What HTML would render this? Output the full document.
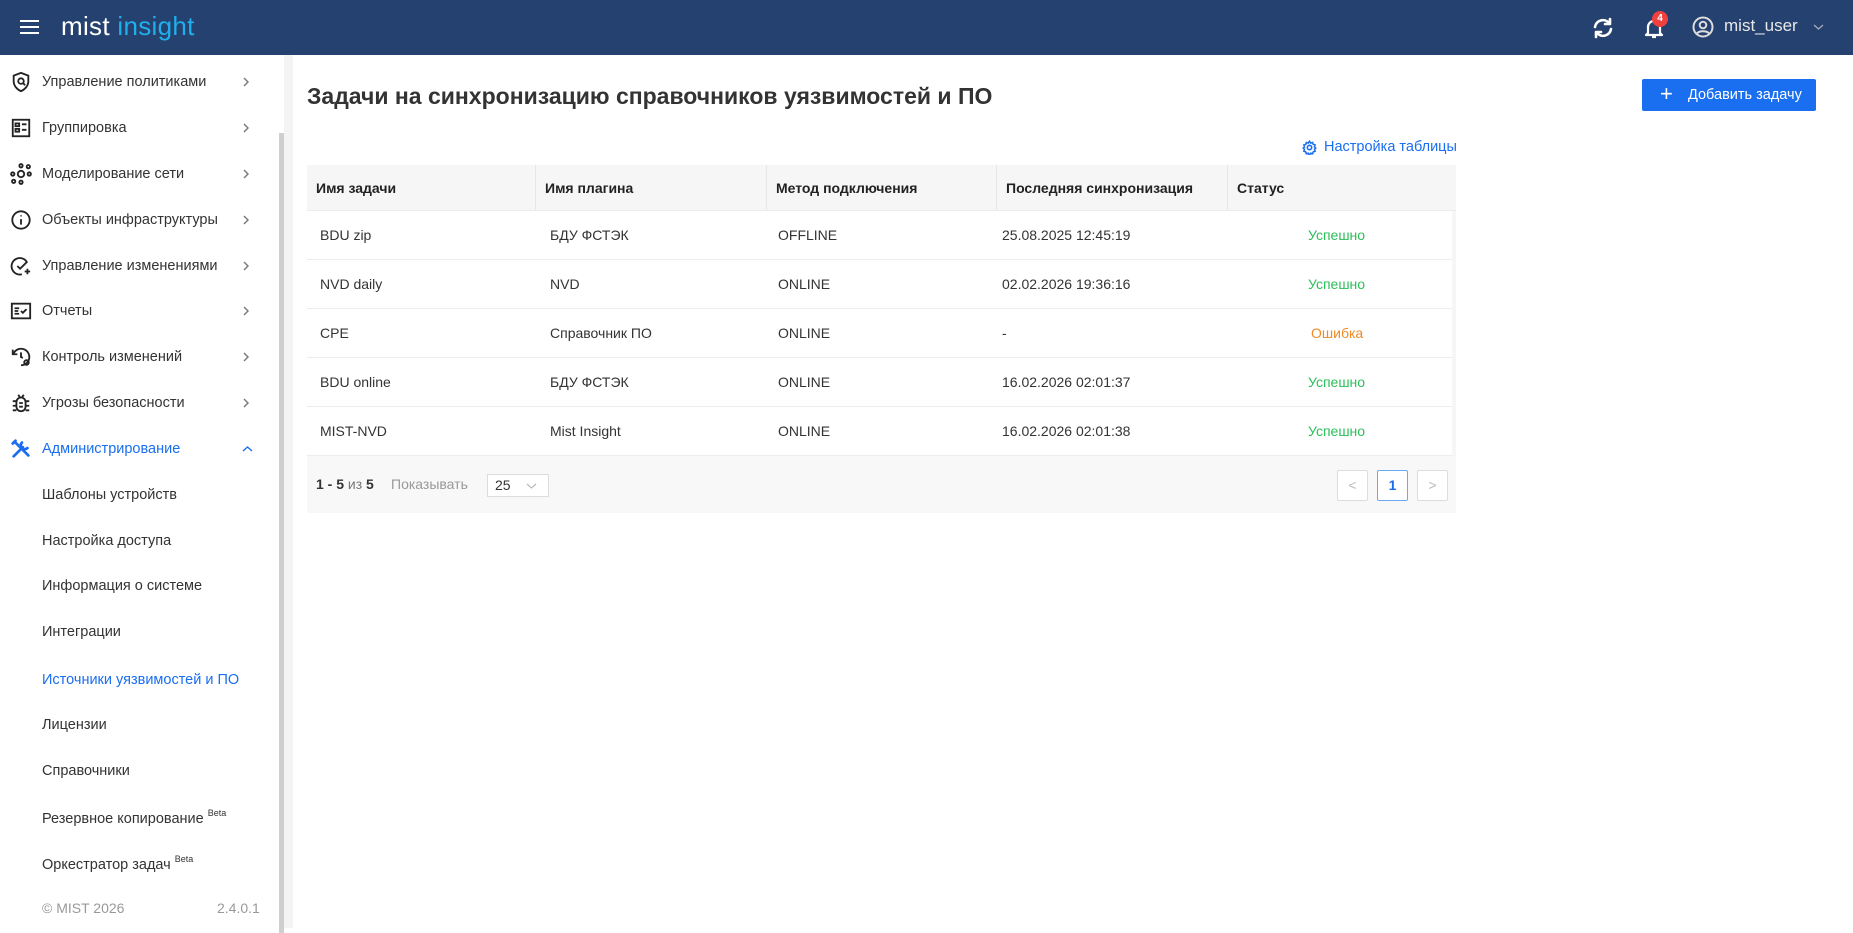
<!DOCTYPE html>
<html><head><meta charset="utf-8"><style>
*{box-sizing:border-box;margin:0;padding:0}
body{width:1853px;height:928px;overflow:hidden;font-family:"Liberation Sans",sans-serif;background:#fff;color:#333;position:relative}
.hdr{position:absolute;left:0;top:0;width:1853px;height:55px;background:#24416f}
.abs{position:absolute}
.side{position:absolute;left:0;top:55px;width:279px;height:873px;background:#fff}
.item{position:absolute;left:42px;font-size:14.5px;color:#333;line-height:18px}
.chev{position:absolute;left:242px;width:9px;height:14px}
.ico{position:absolute;left:10px;width:22px;height:22px}
.sub{position:absolute;left:42px;font-size:14.5px;color:#333;line-height:18px}
sup{font-size:9px;vertical-align:7px}
.th{position:absolute;top:165px;height:46px;background:#f6f6f6;font-weight:bold;font-size:14px;line-height:46px;color:#222}
.row{position:absolute;left:307px;width:1145px;height:49px;border-bottom:1px solid #ececec;font-size:14px;color:#333}
.row span{position:absolute;line-height:48px}
.ok{color:#2cbf5a}.err{color:#f08a24}
.pb{position:absolute;top:470px;width:31px;height:31px;border:1px solid #ddd;border-radius:2px;background:#fff;text-align:center;line-height:29px;color:#bbb;font-size:14px}
</style></head><body>
<svg width="0" height="0" style="position:absolute"><defs><symbol id="cv" viewBox="0 0 9 14"><path d="M2 3l4 4-4 4" fill="none" stroke="#777" stroke-width="1.4"/></symbol></defs></svg>
<div class="hdr">
 <div class="abs" style="left:20px;top:20px;width:19px;height:2px;background:#fff;box-shadow:0 6px 0 #fff,0 12px 0 #fff"></div>
 <div class="abs" style="left:61px;top:11px;font-size:26px;color:#fff;letter-spacing:0.3px">mist <span style="color:#1fb0ec">insight</span></div>
 <svg class="abs" style="left:1591px;top:16px" width="24" height="24" viewBox="0 0 24 24" fill="none" stroke="#fff" stroke-width="2.6" stroke-linecap="round"><path d="M4 11a8 8 0 0 1 14-4"/><path d="M20 13a8 8 0 0 1-14 4"/><path d="M19 3v5h-5" stroke-linejoin="round"/><path d="M5 21v-5h5" stroke-linejoin="round"/></svg>
 <svg class="abs" style="left:1642px;top:16px" width="24" height="24" viewBox="0 0 24 24" fill="none" stroke="#fff" stroke-width="2.2"><path d="M6 17V11a6 6 0 0 1 12 0v6l2 2H4z" stroke-linejoin="round"/><path d="M10 21h4"/></svg>
 <div class="abs" style="left:1652px;top:11px;width:16px;height:16px;border-radius:8px;background:#f0413f;color:#fff;font-size:10px;text-align:center;line-height:16px;font-weight:bold">4</div>
 <svg class="abs" style="left:1691px;top:15px" width="24" height="24" viewBox="0 0 24 24" fill="none" stroke="#ddd" stroke-width="2"><circle cx="12" cy="12" r="9.5"/><circle cx="12" cy="10" r="3.3"/><path d="M6 18.5c2-3 10-3 12 0"/></svg>
 <div class="abs" style="left:1724px;top:16px;font-size:17px;color:#e8e8e8">mist_user</div>
 <svg class="abs" style="left:1813px;top:23px" width="11" height="8" viewBox="0 0 11 8"><path d="M1 2l4.5 4 4.5-4" fill="none" stroke="#aab" stroke-width="1.3"/></svg>
</div>

<div class="side">
 <div class="abs" style="left:279px;top:78px;width:5px;height:800px;background:#cfcfcf"></div>
</div>
<div class="abs" style="left:284px;top:55px;width:9px;height:873px;background:#f4f4f4"></div>

<svg class="ico" style="top:71px" viewBox="0 0 24 24" fill="none" stroke="#222" stroke-width="2"><path d="M12 2l8 3v6c0 5-3.5 9-8 11-4.5-2-8-6-8-11V5z"/><circle cx="12" cy="11" r="3"/><path d="M14.5 13.5l2 2"/></svg>
<div class="item" style="top:73px">Управление политиками</div><svg class="chev" style="top:75px"><use href="#cv"/></svg>
<svg class="ico" style="top:117px" viewBox="0 0 24 24" fill="none" stroke="#222" stroke-width="2"><rect x="3" y="3" width="18" height="18"/><rect x="6" y="7" width="4" height="3"/><rect x="6" y="13" width="4" height="3"/><path d="M13 8h5M13 14h5"/></svg>
<div class="item" style="top:119px">Группировка</div><svg class="chev" style="top:121px"><use href="#cv"/></svg>
<svg class="ico" style="top:163px" viewBox="0 0 24 24" fill="none" stroke="#222" stroke-width="2"><circle cx="12" cy="12" r="3.5"/><circle cx="12" cy="3" r="1.8"/><circle cx="12" cy="21" r="1.8"/><circle cx="3" cy="12" r="1.8"/><circle cx="21" cy="12" r="1.8"/><circle cx="4" cy="20" r="1.8"/><circle cx="20" cy="4" r="1.8"/></svg>
<div class="item" style="top:165px">Моделирование сети</div><svg class="chev" style="top:167px"><use href="#cv"/></svg>
<svg class="ico" style="top:209px" viewBox="0 0 24 24" fill="none" stroke="#222" stroke-width="2"><circle cx="12" cy="12" r="9.5"/><path d="M12 11v6M12 7v1"/></svg>
<div class="item" style="top:211px">Объекты инфраструктуры</div><svg class="chev" style="top:213px"><use href="#cv"/></svg>
<svg class="ico" style="top:255px" viewBox="0 0 24 24" fill="none" stroke="#222" stroke-width="2"><path d="M18 7A9 9 0 1 0 13 21"/><path d="M8 12l3 3 8-8M19 15v6M16 18h6"/></svg>
<div class="item" style="top:257px">Управление изменениями</div><svg class="chev" style="top:259px"><use href="#cv"/></svg>
<svg class="ico" style="top:300px" viewBox="0 0 24 24" fill="none" stroke="#222" stroke-width="2"><rect x="2" y="4" width="20" height="16"/><path d="M5 9h5M5 12h4M5 15h5M12 12l2 2 4-4"/></svg>
<div class="item" style="top:302px">Отчеты</div><svg class="chev" style="top:304px"><use href="#cv"/></svg>
<svg class="ico" style="top:346px" viewBox="0 0 24 24" fill="none" stroke="#222" stroke-width="2"><path d="M4 8a9 9 0 1 1 8 13"/><path d="M3 4v5h5M12 7v5l2 1"/><circle cx="18" cy="18" r="2.5"/></svg>
<div class="item" style="top:348px">Контроль изменений</div><svg class="chev" style="top:350px"><use href="#cv"/></svg>
<svg class="ico" style="top:392px" viewBox="0 0 24 24" fill="none" stroke="#222" stroke-width="2"><rect x="7" y="6" width="10" height="15" rx="5"/><path d="M3 10h4M3 15h4M17 10h4M17 15h4M3 20h4M17 20h4M9 3l2 3M15 3l-2 3M10 12h4M10 16h4"/></svg>
<div class="item" style="top:394px">Угрозы безопасности</div><svg class="chev" style="top:396px"><use href="#cv"/></svg>
<svg class="ico" style="top:438px" viewBox="0 0 24 24" fill="none" stroke="#1a6ef0" stroke-width="3" stroke-linecap="round"><path d="M4 20L14 10"/><path d="M13 5a4 4 0 0 0 6 6"/><path d="M5 4l15 15"/><path d="M3 6l3-3"/></svg>
<div class="item" style="top:440px;color:#1a6ef0">Администрирование</div>
<svg class="abs" style="left:242px;top:445px" width="11" height="8" viewBox="0 0 11 8"><path d="M1 6l4.5-4 4.5 4" fill="none" stroke="#1a6ef0" stroke-width="1.4"/></svg>
<div class="sub" style="top:486px">Шаблоны устройств</div>
<div class="sub" style="top:532px">Настройка доступа</div>
<div class="sub" style="top:577px">Информация о системе</div>
<div class="sub" style="top:623px">Интеграции</div>
<div class="sub" style="top:671px;color:#1a6ef0">Источники уязвимостей и ПО</div>
<div class="sub" style="top:716px">Лицензии</div>
<div class="sub" style="top:762px">Справочники</div>
<div class="sub" style="top:804px">Резервное копирование <sup>Beta</sup></div>
<div class="sub" style="top:850px">Оркестратор задач <sup>Beta</sup></div>
<div class="abs" style="left:42px;top:900px;font-size:14px;color:#999">© MIST 2026</div>
<div class="abs" style="left:217px;top:900px;font-size:14px;color:#999">2.4.0.1</div>

<div class="abs" style="left:307px;top:83px;font-size:23px;font-weight:bold;color:#333">Задачи на синхронизацию справочников уязвимостей и ПО</div>
<div class="abs" style="left:1642px;top:79px;width:174px;height:32px;background:#1a6ef0;border-radius:2px;color:#fff;font-size:14.5px;line-height:32px"><span style="position:absolute;left:18px;font-size:22px;top:-1px">+</span><span style="position:absolute;left:46px">Добавить задачу</span></div>
<svg class="abs" style="left:1302px;top:140px" width="15" height="15" viewBox="0 0 24 24" fill="none" stroke="#1a6ef0" stroke-width="2.5"><circle cx="12" cy="12" r="3.5"/><path d="M12 2l2 3 3-1 1 3 3 1-1 3 2 2-2 2 1 3-3 1-1 3-3-1-2 3-2-3-3 1-1-3-3-1 1-3-2-2 2-2-1-3 3-1 1-3 3 1z"/></svg>
<div class="abs" style="left:1324px;top:139px;font-size:14.5px;color:#1a6ef0">Настройка таблицы</div>

<div class="th" style="left:307px;width:228px;padding-left:9px">Имя задачи</div>
<div class="th" style="left:535px;width:231px;padding-left:9px;border-left:1px solid #e6e6e6">Имя плагина</div>
<div class="th" style="left:766px;width:230px;padding-left:9px;border-left:1px solid #e6e6e6">Метод подключения</div>
<div class="th" style="left:996px;width:231px;padding-left:9px;border-left:1px solid #e6e6e6">Последняя синхронизация</div>
<div class="th" style="left:1227px;width:229px;padding-left:9px;border-left:1px solid #e6e6e6">Статус</div>
<div class="abs" style="left:307px;top:210px;width:1149px;height:1px;background:#ececec"></div>

<div class="row" style="top:211px"><span style="left:13px">BDU zip</span><span style="left:243px">БДУ ФСТЭК</span><span style="left:471px">OFFLINE</span><span style="left:695px">25.08.2025 12:45:19</span><span class="ok" style="left:1001px">Успешно</span></div>
<div class="row" style="top:260px"><span style="left:13px">NVD daily</span><span style="left:243px">NVD</span><span style="left:471px">ONLINE</span><span style="left:695px">02.02.2026 19:36:16</span><span class="ok" style="left:1001px">Успешно</span></div>
<div class="row" style="top:309px"><span style="left:13px">CPE</span><span style="left:243px">Справочник ПО</span><span style="left:471px">ONLINE</span><span style="left:695px">-</span><span class="err" style="left:1004px">Ошибка</span></div>
<div class="row" style="top:358px"><span style="left:13px">BDU online</span><span style="left:243px">БДУ ФСТЭК</span><span style="left:471px">ONLINE</span><span style="left:695px">16.02.2026 02:01:37</span><span class="ok" style="left:1001px">Успешно</span></div>
<div class="row" style="top:407px"><span style="left:13px">MIST-NVD</span><span style="left:243px">Mist Insight</span><span style="left:471px">ONLINE</span><span style="left:695px">16.02.2026 02:01:38</span><span class="ok" style="left:1001px">Успешно</span></div>
<div class="abs" style="left:1452px;top:211px;width:4px;height:245px;background:#f6f6f6"></div>

<div class="abs" style="left:307px;top:456px;width:1149px;height:57px;background:#f8f8f8"></div>
<div class="abs" style="left:316px;top:476px;font-size:14px;color:#333"><b>1 - 5</b> <span style="color:#777">из</span> <b>5</b></div>
<div class="abs" style="left:391px;top:476px;font-size:14px;color:#999">Показывать</div>
<div class="abs" style="left:487px;top:474px;width:62px;height:23px;border:1px solid #ddd;background:#fff;font-size:14px;line-height:21px;padding-left:7px;color:#333">25<svg style="position:absolute;left:38px;top:7px" width="11" height="8" viewBox="0 0 11 8"><path d="M1 2l4.5 4 4.5-4" fill="none" stroke="#bbb" stroke-width="1.2"/></svg></div>
<div class="pb" style="left:1337px">&lt;</div>
<div class="pb" style="left:1377px;border-color:#6aaaf5;color:#1a6ef0;font-weight:bold">1</div>
<div class="pb" style="left:1417px">&gt;</div>
</body></html>
